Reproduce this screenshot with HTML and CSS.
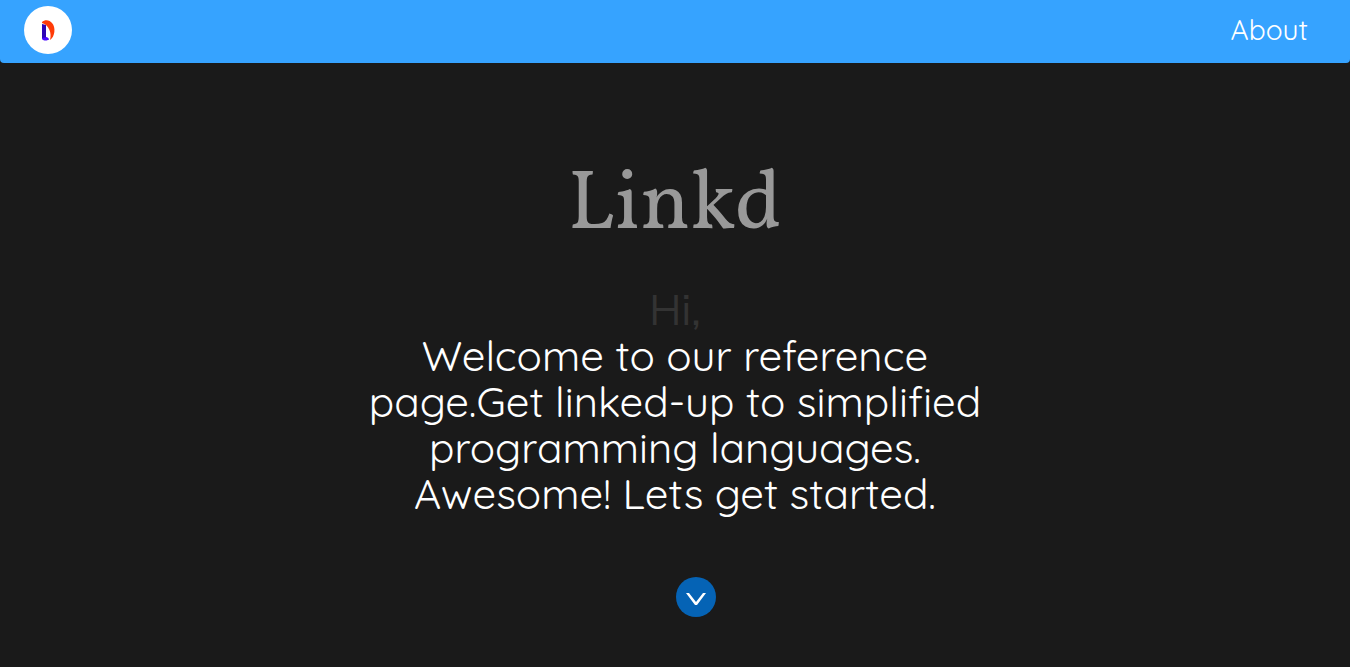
FILE: index.html
```html
<!DOCTYPE html>
<html lang="en">
<head>
<meta charset="utf-8">
<meta name="viewport" content="width=device-width, initial-scale=1">
<title>Linkd</title>
<link rel="stylesheet" href="styles.css">
</head>
<body>
<header class="navbar">
  <a class="brand" href="#" aria-label="Linkd home">
    <svg class="logo" viewBox="0 0 48 48" aria-hidden="true">
      <path d="M18 16c3-3 8-2 10 1 4 4 3 14-2 17 2-7-1-15-8-17z" fill="#ff3b08"/>
      <path d="M18 18l4 1v13l3 1-1 1-6-1z" fill="#2d05b5"/>
      <path d="M18 32l5-1 2 2c-2 2-5 2-7 0z" fill="#4a08ff"/>
    </svg>
  </a>
  <nav><a class="nav-link" href="#about">About</a></nav>
</header>
<main class="hero">
  <h1 class="title">Linkd</h1>
  <p class="greeting">Hi,</p>
  <p class="intro">Welcome to our reference page.Get linked-up to simplified programming languages. Awesome! Lets get started.</p>
  <a class="down" href="#about" aria-label="Get started">
    <svg class="chevron" viewBox="0 0 40 40" aria-hidden="true"><path d="M10 16h3l7 9 7-9h3L21 28h-2z" fill="#fff"/></svg>
  </a>
</main>
</body>
</html>
```
FILE: styles.css
```css
body {
  margin: 0;
  background: #1a1a1a;
  color: #fff;
  font-family: Quicksand, Lato, sans-serif;
}
.navbar {
  display: flex;
  align-items: center;
  justify-content: space-between;
  box-sizing: border-box;
  height: 63px;
  padding: 0 42px 3px 24px;
  background: #36a3ff;
  border-radius: 0 0 4px 4px;
}
.brand {
  display: block;
  width: 48px;
  height: 48px;
  border-radius: 50%;
  background: #fff;
}
.logo, .chevron { display: block; }
.nav-link {
  display: block;
  padding-bottom: 2px;
  color: #fff;
  font-size: 28px;
  text-decoration: none;
}
.hero {
  display: flex;
  flex-direction: column;
  align-items: center;
  padding: 86px 16px 50px;
  text-align: center;
}
.title {
  margin: 0 0 22px;
  color: #999;
  font: 400 84px/116px Vollkorn, "Liberation Serif", serif;
}
.greeting, .intro {
  margin: 0;
  font-size: 42px;
  line-height: 46px;
}
.greeting {
  color: #333;
  font-family: Muli, Mulish, "Liberation Sans", sans-serif;
}
.intro {
  max-width: 640px;
  margin-bottom: 60px;
}
.down {
  width: 40px;
  height: 40px;
  margin-left: 42px;
  border-radius: 50%;
  background: #0563b5;
}
```
